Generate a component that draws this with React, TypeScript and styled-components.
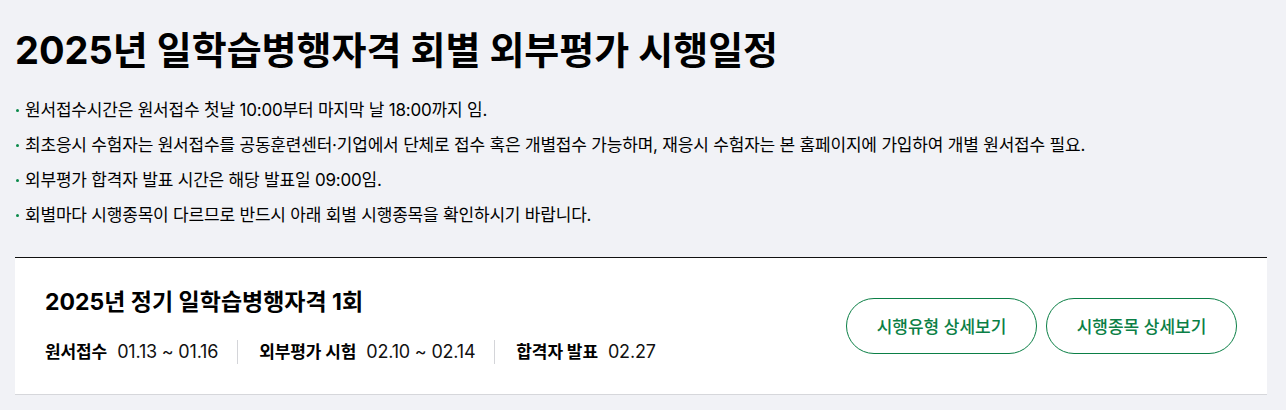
import React from "react";
import styled, { createGlobalStyle } from "styled-components";

const Global = createGlobalStyle`
  html, body { margin: 0; padding: 0; background: #f1f2f6; }
  body { font-family: Inter, "Noto Sans CJK KR", sans-serif; color: #111; }
  * { box-sizing: border-box; }
`;

const Page = styled.div`
  padding: 24px 19px 15px 15px;
`;

const Title = styled.h1`
  margin: 0;
  font-size: 38px;
  line-height: 52px;
  font-weight: 700;
  letter-spacing: 0;
  color: #000;
`;

const Notes = styled.ul`
  list-style: none;
  margin: 22px 0 0;
  padding: 0;
  display: flex;
  flex-direction: column;
  gap: 11px;
`;

const Note = styled.li`
  position: relative;
  padding-left: 10px;
  font-size: 17px;
  line-height: 24px;
  color: #000;
  letter-spacing: -0.2px;
  &::before {
    content: "";
    position: absolute;
    left: 1px;
    top: 11px;
    width: 3px;
    height: 3px;
    border-radius: 50%;
    background: #0a8a4a;
  }
`;

const Card = styled.section`
  margin-top: 30px;
  background: #fff;
  border-top: 1px solid #111;
  border-bottom: 1px solid #d6d7db;
  padding: 29px 30px 30px 30px;
  display: flex;
  align-items: center;
  justify-content: space-between;
`;

const CardInfo = styled.div`
  display: flex;
  flex-direction: column;
  gap: 23px;
`;

const CardTitle = styled.h2`
  margin: 0;
  font-size: 23px;
  line-height: 30px;
  font-weight: 700;
  color: #000;
  letter-spacing: 0;
`;

const Schedule = styled.div`
  display: flex;
  align-items: center;
`;

const Item = styled.div<{ $first?: boolean }>`
  display: flex;
  align-items: center;
  gap: 10px;
  line-height: 24px;
  padding: 0 19px 0 21px;
  ${(p) => (p.$first ? "padding-left: 0;" : "")}
  & + & {
    border-left: 1px solid #d4d5d9;
  }
`;

const Label = styled.span`
  font-size: 17px;
  font-weight: 700;
  color: #000;
  letter-spacing: -0.1px;
`;

const Value = styled.span`
  font-size: 18px;
  font-weight: 400;
  color: #111;
  letter-spacing: -0.2px;
`;

const Buttons = styled.div`
  display: flex;
  gap: 9px;
`;

const PillButton = styled.button`
  width: 191px;
  height: 56px;
  border-radius: 28px;
  border: 1px solid #0b7f46;
  background: #fff;
  color: #0b7f46;
  font-family: inherit;
  font-size: 17px;
  font-weight: 500;
  letter-spacing: 0;
  cursor: pointer;
`;

const notes = [
  "원서접수시간은 원서접수 첫날 10:00부터 마지막 날 18:00까지 임.",
  "최초응시 수험자는 원서접수를 공동훈련센터·기업에서 단체로 접수 혹은 개별접수 가능하며, 재응시 수험자는 본 홈페이지에 가입하여 개별 원서접수 필요.",
  "외부평가 합격자 발표 시간은 해당 발표일 09:00임.",
  "회별마다 시행종목이 다르므로 반드시 아래 회별 시행종목을 확인하시기 바랍니다.",
];

const schedule = [
  { label: "원서접수", value: "01.13 ~ 01.16" },
  { label: "외부평가 시험", value: "02.10 ~ 02.14" },
  { label: "합격자 발표", value: "02.27" },
];

export default function App() {
  return (
    <>
      <Global />
      <Page>
        <Title>2025년 일학습병행자격 회별 외부평가 시행일정</Title>
        <Notes>
          {notes.map((n) => (
            <Note key={n}>{n}</Note>
          ))}
        </Notes>
        <Card>
          <CardInfo>
            <CardTitle>2025년 정기 일학습병행자격 1회</CardTitle>
            <Schedule>
              {schedule.map((s, i) => (
                <Item key={s.label} $first={i === 0}>
                  <Label>{s.label}</Label>
                  <Value>{s.value}</Value>
                </Item>
              ))}
            </Schedule>
          </CardInfo>
          <Buttons>
            <PillButton>시행유형 상세보기</PillButton>
            <PillButton>시행종목 상세보기</PillButton>
          </Buttons>
        </Card>
      </Page>
    </>
  );
}
